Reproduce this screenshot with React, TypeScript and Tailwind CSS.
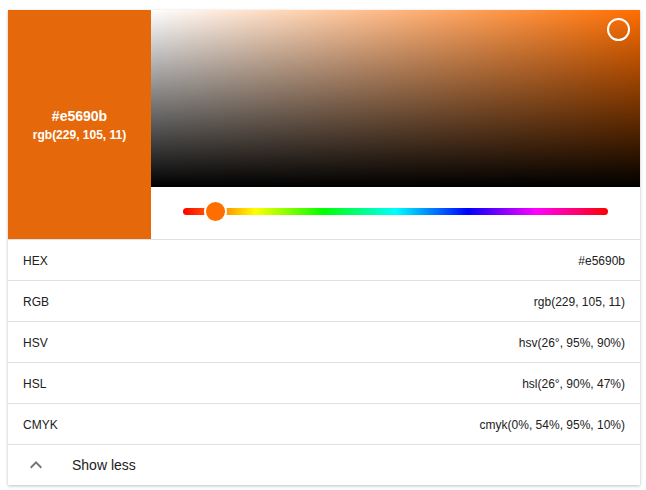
import React from "react";

const rows: [string, string][] = [
  ["HEX", "#e5690b"],
  ["RGB", "rgb(229, 105, 11)"],
  ["HSV", "hsv(26°, 95%, 90%)"],
  ["HSL", "hsl(26°, 90%, 47%)"],
  ["CMYK", "cmyk(0%, 54%, 95%, 10%)"],
];

export default function App() {
  return (
    <div className="w-[646px] h-[490px] bg-white pt-[10px] pl-[8px] font-['Liberation_Sans',Arial,sans-serif]">
      <div className="w-[632px] bg-white shadow-[0_1px_3px_rgba(0,0,0,0.25)] flex flex-col">
        <div className="flex h-[229px]">
          <div className="w-[143px] bg-[#e5690b] flex flex-col items-center justify-center text-white font-bold">
            <div className="text-[14px] leading-[18px]">#e5690b</div>
            <div className="text-[12px] leading-[16px] mt-[2px]">rgb(229, 105, 11)</div>
          </div>
          <div className="flex-1 flex flex-col">
            <div className="relative h-[177px] bg-[#ff6e00]">
              <div className="absolute inset-0 bg-gradient-to-r from-white to-transparent" />
              <div className="absolute inset-0 bg-gradient-to-b from-transparent to-black" />
              <div className="absolute left-[456px] top-[8px] w-[23px] h-[23px] rounded-full border-2 border-white" />
            </div>
            <div className="flex-1 flex items-center px-[32px] pb-[4px]">
              <div
                className="relative w-full h-[7px] rounded-full"
                style={{
                  background:
                    "linear-gradient(to right, #ff0000 0%, #ffff00 17%, #00ff00 33%, #00ffff 50%, #0000ff 67%, #ff00ff 83%, #ff0000 100%)",
                }}
              >
                <div className="absolute left-[21px] top-[-8px] w-[23px] h-[23px] rounded-full bg-[#ff6e00] border-2 border-white" />
              </div>
            </div>
          </div>
        </div>
        {rows.map(([label, value]) => (
          <div key={label} className="h-[41px] border-t border-[#e0e0e0] flex items-center justify-between pl-[15px] pr-[15px] pt-[1px] text-[12px] text-[#212121]">
            <span>{label}</span>
            <span>{value}</span>
          </div>
        ))}
        <div className="h-[41px] border-t border-[#e0e0e0] flex items-center text-[14px] text-[#212121]">
          <svg width="24" height="24" viewBox="0 0 24 24" className="ml-[16px] mr-[24px]">
            <path d="M7.41 15.41 12 10.83l4.59 4.58L18 14l-6-6-6 6z" fill="#757575" />
          </svg>
          <span>Show less</span>
        </div>
      </div>
    </div>
  );
}
